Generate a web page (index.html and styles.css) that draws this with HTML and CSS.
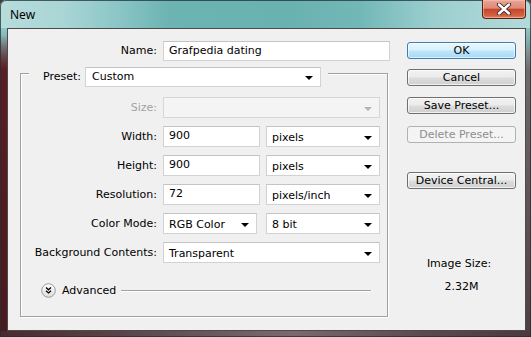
FILE: index.html
```html
<!DOCTYPE html>
<html>
<head>
<meta charset="utf-8">
<link rel="stylesheet" href="styles.css">
</head>
<body>
<div class="window">
  <div class="titlebar">
    <span class="title">New</span>
    <div class="close">
      <svg width="16" height="12" viewBox="0 0 16 12">
        <path d="M3 1.5 L13 10.5 M13 1.5 L3 10.5" stroke="#3a2a28" stroke-width="4.2" stroke-linecap="round"/>
        <path d="M3 1.5 L13 10.5 M13 1.5 L3 10.5" stroke="#ffffff" stroke-width="2.4" stroke-linecap="round"/>
      </svg>
    </div>
  </div>
  <div class="client">
    <div class="main">
      <div class="name-row">
        <span class="lbl">Name:</span>
        <div class="field">Grafpedia dating</div>
      </div>
      <div class="group">
        <div class="group-head">
          <span class="lbl">Preset:</span>
          <div class="select preset"><span>Custom</span><i class="arrow"></i></div>
        </div>
        <div class="rows">
          <span class="lbl disabled">Size:</span>
          <div class="select disabled-select"><span></span><i class="arrow grey"></i></div>

          <span class="lbl">Width:</span>
          <div class="pair">
            <div class="field num">900</div>
            <div class="select unit"><span>pixels</span><i class="arrow"></i></div>
          </div>

          <span class="lbl">Height:</span>
          <div class="pair">
            <div class="field num">900</div>
            <div class="select unit"><span>pixels</span><i class="arrow"></i></div>
          </div>

          <span class="lbl">Resolution:</span>
          <div class="pair">
            <div class="field num">72</div>
            <div class="select unit"><span>pixels/inch</span><i class="arrow"></i></div>
          </div>

          <span class="lbl">Color Mode:</span>
          <div class="pair">
            <div class="select mode"><span>RGB Color</span><i class="arrow"></i></div>
            <div class="select unit"><span>8 bit</span><i class="arrow"></i></div>
          </div>

          <span class="lbl">Background Contents:</span>
          <div class="select"><span>Transparent</span><i class="arrow"></i></div>
        </div>
        <div class="advanced">
          <svg class="adv-icon" width="15" height="15" viewBox="0 0 15 15">
            <defs>
              <linearGradient id="g" x1="0" y1="0" x2="0" y2="1">
                <stop offset="0" stop-color="#ffffff"/>
                <stop offset="1" stop-color="#dcdcdc"/>
              </linearGradient>
            </defs>
            <circle cx="7.5" cy="7.5" r="6.8" fill="url(#g)" stroke="#9a9a9a" stroke-width="1"/>
            <path d="M5 4.6 L7.5 6.8 L10 4.6 M5 7.8 L7.5 10 L10 7.8" fill="none" stroke="#000" stroke-width="1.3"/>
          </svg>
          <span class="adv-text">Advanced</span>
          <span class="adv-line"></span>
        </div>
      </div>
    </div>
    <div class="side">
      <div class="btn default b-ok">OK</div>
      <div class="btn b-cancel">Cancel</div>
      <div class="btn b-save">Save Preset...</div>
      <div class="btn btn-disabled b-delete">Delete Preset...</div>
      <div class="btn b-device">Device Central...</div>
      <div class="imgsize">
        <div class="is-label">Image Size:</div>
        <div class="is-value">2.32M</div>
      </div>
    </div>
  </div>
</div>
</body>
</html>
```

FILE: styles.css
```css
* { box-sizing: border-box; }
html, body { margin: 0; padding: 0; }
body {
  width: 531px;
  height: 337px;
  overflow: hidden;
  background: #4a3a3e;
  font-family: "DejaVu Sans", sans-serif;
  font-size: 11px;
  color: #000;
}
.window {
  width: 531px;
  height: 337px;
  display: flex;
  flex-direction: column;
  border-radius: 6px 6px 0 0;
  box-shadow: inset 0 0 0 1px rgba(30, 50, 52, 0.75);
  background:
    linear-gradient(to right, #b7dcdc 0%, #a9d5d5 12%, #8cc6c6 22%, #6cb3b3 32%, #6ab1b1 55%, #73b8b8 68%, #9dcfcf 82%, #b3dada 100%) 0 0 / 100% 28px no-repeat,
    linear-gradient(to right, #4a2a2e 0%, #5e4e52 30%, #7a6a6e 55%, #5a4a4e 80%, #4a3a3e 100%) 0 100% / 100% 6px no-repeat,
    linear-gradient(to bottom, rgba(91, 28, 34, 0) 0, rgba(91, 28, 34, 0) 35px, #5b1c22 70px, #4a1a1e 100%) 0 0 / 7px 100% no-repeat,
    linear-gradient(to bottom, #a6d4d4 0, #8cc4c4 30px, #6f6a6c 70px, #4e3e42 100%);
}
.titlebar {
  height: 28px;
  display: flex;
  align-items: flex-start;
  padding-left: 10px;
}
.title {
  font-family: "Noto Sans", sans-serif;
  font-size: 12px;
  line-height: 30px;
  color: #000;
}
.close {
  margin-left: auto;
  margin-right: 5px;
  width: 44px;
  height: 19px;
  border: 1px solid #5a2018;
  border-top: none;
  border-radius: 0 0 4px 4px;
  background: linear-gradient(to bottom, #e9a595 0%, #dc8a78 45%, #c7452a 52%, #d1603f 85%, #e0876a 100%);
  box-shadow: inset 0 0 0 1px rgba(255, 200, 180, 0.5);
  display: flex;
  align-items: center;
  justify-content: center;
}
.client {
  margin-left: 7px;
  width: 519px;
  height: 303px;
  background: #f0f0f0;
  border: 1px solid #4b4b4b;
  display: flex;
}
.main {
  width: 399px;
  padding-top: 12px;
}
.lbl {
  text-align: right;
  white-space: nowrap;
  line-height: 14px;
}
.lbl.disabled { color: #a3a3a3; }
.name-row {
  display: grid;
  grid-template-columns: 149px 227px;
  column-gap: 6px;
  align-items: center;
  height: 20px;
}
.field {
  height: 20px;
  background: #fff;
  border: 1px solid #d2d2d2;
  border-top-color: #c4c4c4;
  padding: 0 5px;
  line-height: 17px;
  white-space: nowrap;
}
.rows .field { height: 21px; }
.select {
  height: 21px;
  background: #fff;
  border: 1px solid #d2d2d2;
  border-top-color: #c4c4c4;
  padding: 0 5px;
  display: flex;
  align-items: center;
  justify-content: space-between;
  white-space: nowrap;
  line-height: 14px;
}
.select span { padding-top: 2px; }
.arrow {
  width: 0;
  height: 0;
  border-left: 4px solid transparent;
  border-right: 4px solid transparent;
  border-top: 4px solid #000;
  margin-right: 2px;
  margin-top: 2px;
}
.arrow.grey { border-top-color: #b4b4b4; }
.disabled-select {
  background: #f4f4f4;
  border-color: #d6d6d6;
}
.group {
  margin: 12px 0 0 12px;
  width: 368px;
  height: 244px;
  border: 1px solid #a0a0a0;
  box-shadow: 1px 1px 0 #fff, inset 1px 1px 0 #fff;
  display: flex;
  flex-direction: column;
}
.group-head {
  align-self: flex-start;
  display: flex;
  align-items: center;
  gap: 4px;
  height: 20px;
  margin: -7px 0 0 8px;
  padding: 0 7px 0 14px;
  background: #f0f0f0;
}
.preset {
  width: 236px;
  height: 20px;
  padding-left: 6px;
}
.preset span { padding-top: 0; }
.rows {
  margin-top: 10px;
  display: grid;
  grid-template-columns: 136px 217px;
  grid-auto-rows: 21px;
  column-gap: 6px;
  row-gap: 8px;
  align-items: center;
}
.pair {
  display: flex;
  justify-content: space-between;
}
.num { width: 97px; }
.unit { width: 114px; }
.mode { width: 94px; }
.advanced {
  display: flex;
  align-items: center;
  height: 15px;
  margin: 20px 16px 0 20px;
}
.adv-text {
  margin-left: 6px;
  line-height: 14px;
}
.adv-line {
  flex: 1;
  margin-left: 5px;
  height: 2px;
  border-top: 1px solid #a0a0a0;
  border-bottom: 1px solid #fff;
}
.side {
  width: 109px;
  padding-top: 13px;
  display: flex;
  flex-direction: column;
}
.btn {
  height: 17px;
  border: 1px solid #707070;
  border-radius: 3px;
  background: linear-gradient(to bottom, #f2f2f2 0%, #ebebeb 48%, #dddddd 52%, #cfcfcf 100%);
  box-shadow: inset 0 0 0 1px rgba(255, 255, 255, 0.7);
  text-align: center;
  line-height: 15px;
  white-space: nowrap;
}
.btn.default {
  border-color: #3c7fb1;
  background: linear-gradient(to bottom, #eaf6fd 0%, #d9f0fc 48%, #bee6fd 52%, #a7d9f5 100%);
  box-shadow: inset 0 0 0 1px rgba(255, 255, 255, 0.6);
}
.btn.btn-disabled {
  border-color: #adb2b5;
  background: #f4f4f4;
  color: #8d8d8d;
  box-shadow: none;
}
.b-cancel { margin-top: 10px; }
.b-save { margin-top: 11px; }
.b-delete { margin-top: 12px; }
.b-device { margin-top: 29px; }
.imgsize {
  margin-top: 68px;
  text-align: center;
  line-height: 13px;
}
.is-label { padding-right: 5px; }
.is-value { margin-top: 10px; }
```
